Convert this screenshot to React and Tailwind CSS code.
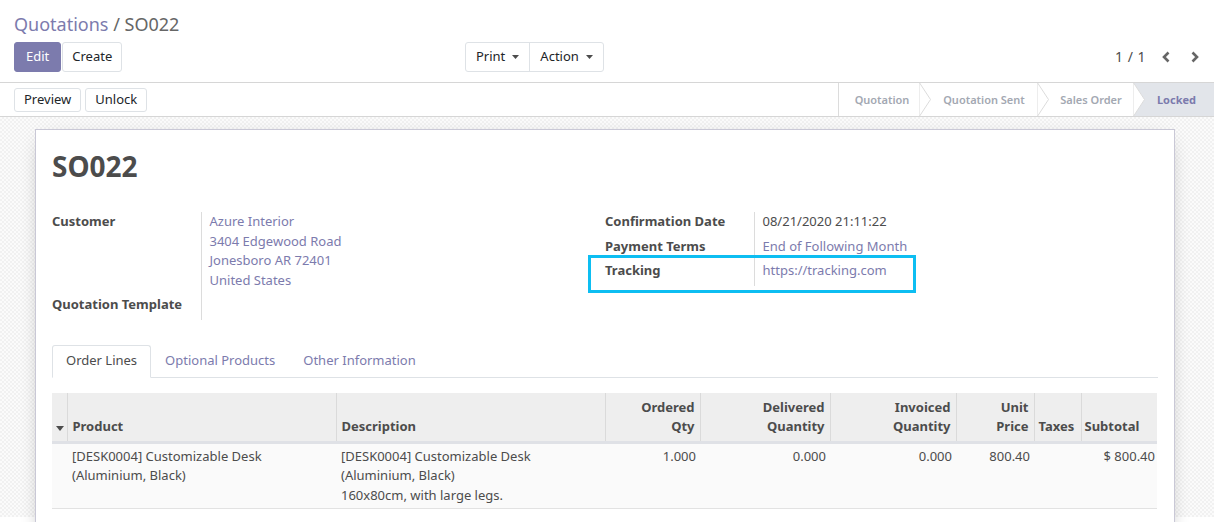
import React from "react";

const Caret = () => (
  <svg width="7" height="4" viewBox="0 0 7 4" className="ml-[7px] inline-block">
    <polygon points="0,0 7,0 3.5,4" fill="#4c4c4c" />
  </svg>
);

// thin arrow between two stages of the status bar
const StageArrow = ({ last }) => (
  <svg width="12" height="33" viewBox="0 0 12 33" className="block shrink-0">
    {last && <rect x="0" y="0" width="12" height="33" fill="#e2e5ea" />}
    <polygon points="0,-1 11.5,16.5 0,34" fill="#ffffff" stroke="#dcdcdc" strokeWidth="1" />
  </svg>
);

const Field = ({ label, children }) => (
  <tr>
    <td className="align-top w-[149px] pr-2 pb-[5px] font-bold text-[#4c4c4c] border-r border-[#dcdcdc]">
      {label}
    </td>
    <td className="align-top pl-[8px] pb-[5px]">{children}</td>
  </tr>
);

const columns = [
  { key: "handle", w: "w-[15px]" },
  { key: "product", w: "w-[269px]", label: ["Product"], align: "text-left" },
  { key: "desc", w: "w-[269px]", label: ["Description"], align: "text-left" },
  { key: "qty", w: "w-[95px]", label: ["Ordered", "Qty"], align: "text-right" },
  { key: "delivered", w: "w-[130px]", label: ["Delivered", "Quantity"], align: "text-right" },
  { key: "invoiced", w: "w-[126px]", label: ["Invoiced", "Quantity"], align: "text-right" },
  { key: "price", w: "w-[78px]", label: ["Unit", "Price"], align: "text-right" },
  { key: "taxes", w: "w-[47px]", label: ["Taxes"], align: "text-left" },
  { key: "subtotal", w: "w-[76px]", label: ["Subtotal"], align: "text-left" },
];

export default function App() {
  return (
    <div className="w-[1214px] h-[522px] overflow-hidden bg-white font-['Noto_Sans',sans-serif] text-[13px] leading-[19.5px] text-[#4c4c4c]">
      {/* control panel */}
      <div className="border-b border-[#d6d6d6] px-[14px] pt-[11px] pb-[10px]">
        <div className="text-[18px] leading-[27px] h-[27px] mb-[4px]">
          <span className="text-[#7C7BAD]">Quotations</span>
          <span className="text-[#666666]"> / SO022</span>
        </div>
        <div className="flex items-center h-[30px]">
          <div className="flex w-[451px]">
            <button className="h-[30px] px-[11px] rounded-[3px] bg-[#7C7BAD] text-white border border-[#7C7BAD]">Edit</button>
            <button className="h-[30px] px-[9px] ml-px rounded-[3px] bg-white text-[#212529] border border-[#dee2e6]">Create</button>
          </div>
          <div className="flex h-[30px] border border-[#dee2e6] rounded-[3px] text-[#212529]">
            <button className="flex items-center px-[10px] border-r border-[#dee2e6]">
              Print<Caret />
            </button>
            <button className="flex items-center px-[10px]">
              Action<Caret />
            </button>
          </div>
          <div className="ml-auto flex items-center text-[#4c4c4c]">
            <span className="text-[14px] tracking-[0.5px]">1 / 1</span>
            <svg width="10" height="12" viewBox="0 0 10 12" className="ml-[15px]">
              <path d="M7.5 1.5 L3 6 L7.5 10.5" fill="none" stroke="#666" strokeWidth="2.6" />
            </svg>
            <svg width="10" height="12" viewBox="0 0 10 12" className="ml-[19px]">
              <path d="M2.5 1.5 L7 6 L2.5 10.5" fill="none" stroke="#666" strokeWidth="2.6" />
            </svg>
          </div>
        </div>
      </div>

      {/* status bar */}
      <div className="flex items-stretch h-[34px] border-b border-[#d6d6d6]">
        <div className="flex items-center gap-1 pl-[14px]">
          <button className="h-[24px] px-[9px] rounded-[3px] bg-white text-[#212529] border border-[#dee2e6]">Preview</button>
          <button className="h-[24px] px-[9px] rounded-[3px] bg-white text-[#212529] border border-[#dee2e6]">Unlock</button>
        </div>
        <div className="ml-auto flex items-stretch border-l border-[#dcdcdc] text-[11px] font-semibold text-[#a3a8b2]">
          <div className="w-[80px] flex items-center justify-center pl-[6px]">Quotation</div>
          <StageArrow />
          <div className="w-[106px] flex items-center justify-center">Quotation Sent</div>
          <StageArrow />
          <div className="w-[84px] flex items-center justify-center">Sales Order</div>
          <StageArrow last />
          <div className="w-[69px] flex items-center justify-center pr-[6px] bg-[#e2e5ea] text-[#7C7BAD] font-bold">Locked</div>
        </div>
      </div>

      {/* form body */}
      <div className="h-[400px] pt-[12px] bg-[image:repeating-conic-gradient(#f1f1f1_0_25%,#fbfbfb_0_50%)] bg-[length:4px_4px]">
        <div className="ml-[35px] w-[1140px] h-[420px] bg-white border border-[#c9c8d6] shadow-[0_5px_20px_-10px_rgba(0,0,0,0.45)] px-4 pt-[18px]">
          <h1 className="text-[28px] leading-[36px] font-bold text-[#4c4c4c]">SO022</h1>

          <div className="grid grid-cols-2 mt-[28px]">
            <table className="border-collapse">
              <tbody>
                <Field label="Customer">
                  <div className="text-[#7C7BAD]">
                    <div>Azure Interior</div>
                    <div>3404 Edgewood Road</div>
                    <div>Jonesboro AR 72401</div>
                    <div>United States</div>
                  </div>
                </Field>
                <Field label="Quotation Template">
                  <span />
                </Field>
              </tbody>
            </table>
            <div className="relative">
              <table className="border-collapse">
                <tbody>
                  <Field label="Confirmation Date">08/21/2020 21:11:22</Field>
                  <Field label="Payment Terms">
                    <span className="text-[#7C7BAD]">End of Following Month</span>
                  </Field>
                  <Field label="Tracking">
                    <span className="text-[#7C7BAD]">https://tracking.com</span>
                  </Field>
                </tbody>
              </table>
              <div className="absolute left-[-17px] top-[43px] w-[328px] h-[38px] border-[3px] border-[#0dbef2]" />
            </div>
          </div>

          {/* tabs */}
          <div className="flex mt-[25px] border-b border-[#dee2e6] h-[33px]">
            <div className="h-[33px] px-[13px] flex items-center border border-[#dee2e6] border-b-white rounded-t-[3px] bg-white text-[#4c4c4c]">Order Lines</div>
            <div className="h-[33px] px-[14px] flex items-center text-[#7C7BAD]">Optional Products</div>
            <div className="h-[33px] px-[14px] flex items-center text-[#7C7BAD]">Other Information</div>
          </div>

          {/* order lines */}
          <table className="table-fixed w-[1105px] mt-[15px] border-collapse">
            <thead>
              <tr className="bg-[#eeeeee] border-b-[3px] border-[#dfe1e6]">
                {columns.map((c, i) => (
                  <th
                    key={c.key}
                    className={
                      c.w +
                      " align-bottom font-bold pt-[5px] pb-[4px] " +
                      (c.key === "taxes" ? "px-[4px] " : c.key === "subtotal" ? "pl-[3px] pr-[4px] " : "px-[5px] ") +
                      (c.align || "") +
                      (i < columns.length - 1 ? " border-r border-[#dadada]" : "")
                    }
                  >
                    {c.key === "handle" ? (
                      <svg width="8" height="5" viewBox="0 0 8 5" className="mb-[6px] ml-[-1px]">
                        <polygon points="0,0 8,0 4,5" fill="#4c4c4c" />
                      </svg>
                    ) : (
                      c.label.map((l) => <div key={l}>{l}</div>)
                    )}
                  </th>
                ))}
              </tr>
            </thead>
            <tbody>
              <tr className="bg-[#fafafa] border-b border-[#e2e2e2] align-top">
                <td />
                <td className="px-[5px] pt-[3px] pb-[3px]">
                  [DESK0004] Customizable Desk
                  <br />
                  (Aluminium, Black)
                </td>
                <td className="px-[5px] pt-[3px] pb-[3px]">
                  [DESK0004] Customizable Desk
                  <br />
                  (Aluminium, Black)
                  <br />
                  160x80cm, with large legs.
                </td>
                <td className="px-[4px] pt-[3px] text-right">1.000</td>
                <td className="px-[4px] pt-[3px] text-right">0.000</td>
                <td className="px-[4px] pt-[3px] text-right">0.000</td>
                <td className="px-[4px] pt-[3px] text-right">800.40</td>
                <td />
                <td className="pr-[2px] pt-[3px] text-right whitespace-nowrap">$ 800.40</td>
              </tr>
            </tbody>
          </table>
        </div>
      </div>
    </div>
  );
}
